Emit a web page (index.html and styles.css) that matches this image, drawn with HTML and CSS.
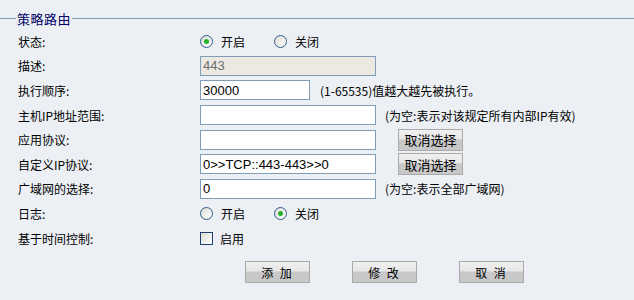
FILE: index.html
```html
<!DOCTYPE html>
<html lang="zh-CN">
<head>
    <meta charset="UTF-8">
    <title>策略路由</title>
    <link rel="stylesheet" href="styles.css">
</head>
<body>
    <!-- 策略路由 -->
    <div class="group-title"><span>策略路由</span></div>

    <div class="form">
        <div class="row">
            <label>状态:</label>
            <div class="field">
                <span class="radio checked"></span><span class="opt">开启</span>
                <span class="radio"></span><span class="opt">关闭</span>
            </div>
        </div>
        <div class="row">
            <label>描述:</label>
            <div class="field"><input type="text" class="txt disabled" value="443" disabled></div>
        </div>
        <div class="row">
            <label>执行顺序:</label>
            <div class="field">
                <input type="text" class="txt short" value="30000">
                <span class="hint short-hint">(1-65535)值越大越先被执行。</span>
            </div>
        </div>
        <div class="row">
            <label>主机IP地址范围:</label>
            <div class="field">
                <input type="text" class="txt">
                <span class="hint">(为空:表示对该规定所有内部IP有效)</span>
            </div>
        </div>
        <div class="row">
            <label>应用协议:</label>
            <div class="field">
                <input type="text" class="txt">
                <button class="btn small">取消选择</button>
            </div>
        </div>
        <div class="row">
            <label>自定义IP协议:</label>
            <div class="field">
                <input type="text" class="txt" value="0&gt;&gt;TCP::443-443&gt;&gt;0">
                <button class="btn small">取消选择</button>
            </div>
        </div>
        <div class="row">
            <label>广域网的选择:</label>
            <div class="field">
                <input type="text" class="txt" value="0">
                <span class="hint">(为空:表示全部广域网)</span>
            </div>
        </div>
        <div class="row">
            <label>日志:</label>
            <div class="field">
                <span class="radio"></span><span class="opt">开启</span>
                <span class="radio checked"></span><span class="opt">关闭</span>
            </div>
        </div>
        <div class="row">
            <label>基于时间控制:</label>
            <div class="field">
                <span class="check"></span><span class="opt">启用</span>
            </div>
        </div>
    </div>

    <div class="actions">
        <button class="btn wide">添 加</button>
        <button class="btn wide">修 改</button>
        <button class="btn wide">取 消</button>
    </div>

    <!-- 列表 -->
    <div class="group-title list-title"><span>列表</span></div>
</body>
</html>
```

FILE: styles.css
```css
* {
    box-sizing: border-box;
}

body {
    margin: 0;
    background: #ecf0f4;
    color: #000;
    font-family: "Noto Sans CJK SC", "Liberation Sans", sans-serif;
    font-size: 12px;
    height: 300px;
    overflow: hidden;
}

/* group header line */
.group-title {
    display: flex;
    align-items: center;
    height: 20px;
    margin-top: 8px;
    color: #000066;
    font-size: 13px;
}

.group-title::before {
    content: "";
    width: 16px;
    border-top: 1px solid #7f9db9;
}

.group-title::after {
    content: "";
    flex: 1;
    border-top: 1px solid #7f9db9;
}

.group-title span {
    padding: 0 1px;
    letter-spacing: 0.5px;
}

.list-title {
    margin: 0 0 0 16px;
}

.list-title::before {
    width: 20px;
    border-top-color: #888;
}

.list-title::after {
    border-top-color: #888;
}

/* form rows */
.form {
    margin-top: 1px;
    padding-left: 18px;
}

.row {
    display: flex;
    align-items: center;
    height: 24.6px;
}

.row label {
    width: 182px;
    flex: none;
}

.field {
    display: flex;
    align-items: center;
}

.txt {
    width: 176px;
    height: 20px;
    border: 1px solid #7f9db9;
    background: #fff;
    padding: 0 2px;
    margin: 0;
    font-family: "Liberation Sans", sans-serif;
    font-size: 13px;
    color: #000;
}

.txt.disabled {
    background: #ebe9e2;
    color: #6d6d6d;
}

.txt.short {
    width: 110px;
}

.hint {
    margin-left: 9px;
}

.short-hint {
    margin-left: 10px;
}

/* radio & checkbox */
.radio {
    width: 13px;
    height: 13px;
    border: 1px solid #2f5b8c;
    border-radius: 50%;
    background: linear-gradient(135deg, #dcdcd6, #fff);
    display: flex;
    align-items: center;
    justify-content: center;
}

.radio.checked::after {
    content: "";
    width: 5px;
    height: 5px;
    border-radius: 50%;
    background: #27b327;
}

.opt {
    margin-left: 8px;
    margin-right: 29px;
}

.check {
    width: 13px;
    height: 13px;
    border: 1px solid #1c3f6e;
    background: linear-gradient(135deg, #dcdcd6, #fff);
}

.check + .opt {
    margin-left: 7px;
}

/* buttons */
.btn {
    height: 22px;
    border: 1px solid #aaa;
    background: linear-gradient(#f0f0f0 0, #e6e6e6 45%, #c8c8c8 50%, #c8c8c8 100%);
    font-family: "Noto Sans CJK SC", sans-serif;
    font-size: 12px;
    color: #000;
    padding: 0;
    margin: 0;
    cursor: pointer;
}

.btn.small {
    width: 65px;
    margin-left: 22px;
    font-size: 13px;
}

.actions {
    display: flex;
    gap: 42px;
    padding-left: 245px;
    margin-top: 11px;
    height: 36px;
}

.btn.wide {
    width: 65px;
    letter-spacing: 2px;
}
```
